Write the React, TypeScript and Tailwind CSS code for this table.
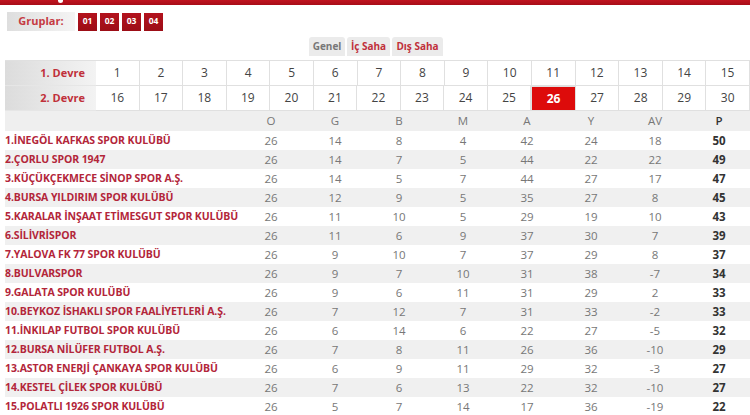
import React from "react";

const teams: [string, number[]][] = [
  ["1.İNEGÖL KAFKAS SPOR KULÜBÜ", [26, 14, 8, 4, 42, 24, 18, 50]],
  ["2.ÇORLU SPOR 1947", [26, 14, 7, 5, 44, 22, 22, 49]],
  ["3.KÜÇÜKÇEKMECE SİNOP SPOR A.Ş.", [26, 14, 5, 7, 44, 27, 17, 47]],
  ["4.BURSA YILDIRIM SPOR KULÜBÜ", [26, 12, 9, 5, 35, 27, 8, 45]],
  ["5.KARALAR İNŞAAT ETİMESGUT SPOR KULÜBÜ", [26, 11, 10, 5, 29, 19, 10, 43]],
  ["6.SİLİVRİSPOR", [26, 11, 6, 9, 37, 30, 7, 39]],
  ["7.YALOVA FK 77 SPOR KULÜBÜ", [26, 9, 10, 7, 37, 29, 8, 37]],
  ["8.BULVARSPOR", [26, 9, 7, 10, 31, 38, -7, 34]],
  ["9.GALATA SPOR KULÜBÜ", [26, 9, 6, 11, 31, 29, 2, 33]],
  ["10.BEYKOZ İSHAKLI SPOR FAALİYETLERİ A.Ş.", [26, 7, 12, 7, 31, 33, -2, 33]],
  ["11.İNKILAP FUTBOL SPOR KULÜBÜ", [26, 6, 14, 6, 22, 27, -5, 32]],
  ["12.BURSA NİLÜFER FUTBOL A.Ş.", [26, 7, 8, 11, 26, 36, -10, 29]],
  ["13.ASTOR ENERJİ ÇANKAYA SPOR KULÜBÜ", [26, 6, 9, 11, 29, 32, -3, 27]],
  ["14.KESTEL ÇİLEK SPOR KULÜBÜ", [26, 7, 6, 13, 22, 32, -10, 27]],
  ["15.POLATLI 1926 SPOR KULÜBÜ", [26, 5, 7, 14, 17, 36, -19, 22]],
];

const headers = ["O", "G", "B", "M", "A", "Y", "AV", "P"];

function DevreRow({ label, start, active }: { label: string; start: number; active?: number }) {
  const nums = Array.from({ length: 15 }, (_, i) => start + i);
  return (
    <div className="flex h-[25px]">
      <div className="w-[91px] shrink-0 flex items-center justify-end pr-[11px] bg-gradient-to-r from-[#dcdcdc] to-[#f3f3f3] border-b border-[#e6e6e6] text-[#c0303a] font-bold text-[11px]">
        {label}
      </div>
      {nums.map((n) => (
        <div
          key={n}
          className={
            n === active
              ? "flex-1 flex items-center justify-center bg-[#dd0b0b] text-white font-bold text-[12px] border border-[#e0e0e0]"
              : "flex-1 flex items-center justify-center bg-white text-[#444] text-[12px] border-r border-b border-[#e0e0e0]"
          }
        >
          {n}
        </div>
      ))}
    </div>
  );
}

export default function App() {
  return (
    <div className="w-[750px] h-[415px] overflow-hidden bg-white relative" style={{ fontFamily: '"Open Sans", "Noto Sans", sans-serif' }}>
      <div className="h-[5px] bg-gradient-to-b from-[#c0141f] to-[#a80d18] relative">
        <div className="absolute left-[58px] top-0 w-[5px] h-[3px] rounded-b-full bg-white"></div>
      </div>
      <div className="flex items-center h-[19px] mt-[7px] pl-[7px]">
        <div className="w-[68px] h-[19px] flex items-center justify-center bg-gradient-to-r from-[#dedede] to-[#f4f4f4] text-[#c53a42] font-bold text-[11px]">
          Gruplar:
        </div>
        <div className="flex gap-[3px] ml-[3px]">
          {["01", "02", "03", "04"].map((g) => (
            <div key={g} className="w-[19px] h-[18px] flex items-center justify-center bg-gradient-to-b from-[#b3121d] to-[#9c0d16] text-white font-bold text-[8.5px]">
              {g}
            </div>
          ))}
        </div>
      </div>
      <div className="flex justify-start pl-[309px] gap-[2px] mt-[6px] h-[19px]">
        <div className="w-[36px] flex items-center justify-center bg-[#ebebeb] rounded-t-[3px] text-[#777] font-bold text-[10px]">Genel</div>
        <div className="w-[43px] flex items-center justify-center bg-[#ebebeb] rounded-t-[3px] text-[#c0303a] font-bold text-[10px]">İç Saha</div>
        <div className="w-[51px] flex items-center justify-center bg-[#ebebeb] rounded-t-[3px] text-[#c0303a] font-bold text-[10px]">Dış Saha</div>
      </div>
      <div className="ml-[5px] mt-[4px] border-t border-[#e0e0e0]">
        <DevreRow label="1. Devre" start={1} />
        <DevreRow label="2. Devre" start={16} active={26} />
      </div>
      <div className="ml-[5px]">
        <div className="grid grid-cols-[234px_repeat(8,64px)] h-[20px] bg-[#efefef] items-center text-[11.5px] text-[#777]">
          <div></div>
          {headers.map((h) => (
            <div key={h} className={h === "P" ? "text-center text-[#333] font-semibold" : "text-center"}>
              {h}
            </div>
          ))}
        </div>
        {teams.map(([name, vals], i) => (
          <div
            key={name}
            className={
              (i % 2 === 1 ? "bg-[#f0f0f0] " : "bg-white ") +
              "grid grid-cols-[234px_repeat(8,64px)] h-[19px] items-center text-[11.5px]"
            }
          >
            <div className="text-[#b3263a] font-bold text-[10.5px] whitespace-nowrap tracking-[-0.1px]">{name}</div>
            {vals.map((v, j) => (
              <div key={j} className={j === 7 ? "text-center text-[#333] font-bold" : "text-center text-[#777] font-normal"}>
                {v}
              </div>
            ))}
          </div>
        ))}
      </div>
    </div>
  );
}
